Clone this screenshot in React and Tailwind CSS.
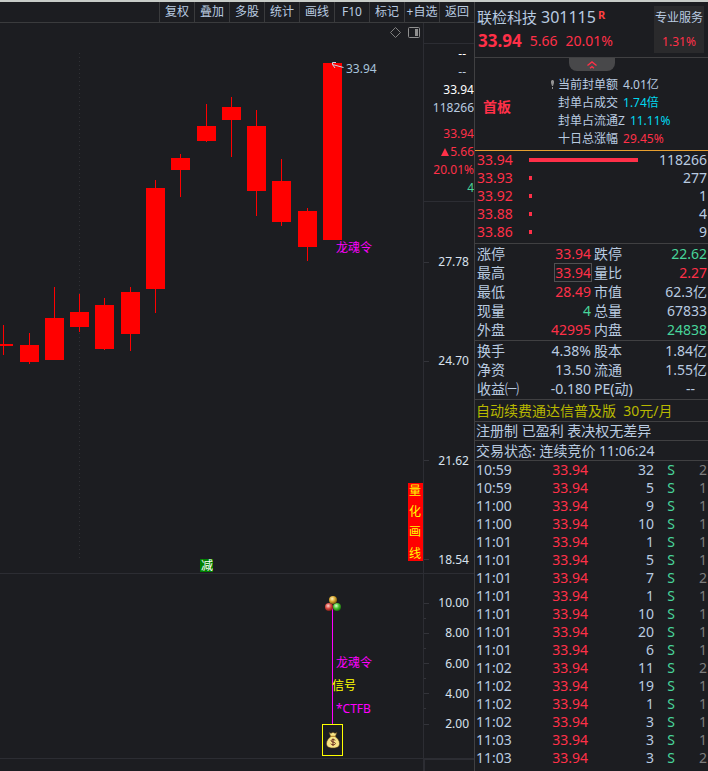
import React from "react";

const tools = ["复权", "叠加", "多股", "统计", "画线", "F10", "标记", "+自选", "返回"];

// x: left of the body, wick: centre line, body / range: top and bottom
const candles = [
    { x: -6, wick: 3, body: [321, 323], range: [302, 332] },
    { x: 20, wick: 29, body: [322, 339], range: [310, 341] },
    { x: 45, wick: 54, body: [295, 337], range: [264, 337] },
    { x: 70, wick: 79, body: [289, 304], range: [271, 309] },
    { x: 95, wick: 104, body: [282, 326], range: [275, 327] },
    { x: 121, wick: 130, body: [269, 311], range: [264, 328] },
    { x: 146, wick: 155, body: [165, 266], range: [157, 290] },
    { x: 171, wick: 180, body: [135, 147], range: [131, 174] },
    { x: 197, wick: 206, body: [103, 118], range: [81, 119] },
    { x: 222, wick: 231, body: [84, 97], range: [74, 134] },
    { x: 247, wick: 256, body: [103, 168], range: [87, 193] },
    { x: 272, wick: 281, body: [158, 199], range: [136, 203] },
    { x: 298, wick: 307, body: [188, 224], range: [185, 238] },
    { x: 323, wick: 332, body: [40, 217], range: [40, 217] },
];

const priceAxis = ["27.78", "24.70", "21.62", "18.54"];
const indicatorAxis = ["10.00", "", "8.00", "", "6.00", "", "4.00", "", "2.00"];

const sealInfo = [
    { label: "当前封单额", value: "4.01亿", color: "text-[#b9cbe0]", mark: true },
    { label: "封单占成交", value: "1.74倍", color: "text-[#00d8f0]" },
    { label: "封单占流通Z", value: "11.11%", color: "text-[#00d8f0]" },
    { label: "十日总涨幅", value: "29.45%", color: "text-[#ff3048]" },
];

const bids = [
    { price: "33.94", volume: "118266", full: true },
    { price: "33.93", volume: "277" },
    { price: "33.92", volume: "1" },
    { price: "33.88", volume: "4" },
    { price: "33.86", volume: "9" },
];

const RED = "text-[#ff3048]";
const GREEN = "text-[#48d49a]";
const PLAIN = "text-[#b9cbe0]";

const quotes = [
    ["涨停", "33.94", RED, "跌停", "22.62", GREEN],
    ["最高", "33.94", RED, "量比", "2.27", RED],
    ["最低", "28.49", RED, "市值", "62.3亿", PLAIN],
    ["现量", "4", GREEN, "总量", "67833", PLAIN],
    ["外盘", "42995", RED, "内盘", "24838", GREEN],
];

const basics = [
    ["换手", "4.38%", PLAIN, "股本", "1.84亿", PLAIN],
    ["净资", "13.50", PLAIN, "流通", "1.55亿", PLAIN],
    ["收益㈠", "-0.180", PLAIN, "PE(动)", "--", PLAIN],
];

const trades = [
    ["10:59", 32, 2],
    ["10:59", 5, 1],
    ["11:00", 9, 1],
    ["11:00", 10, 1],
    ["11:01", 1, 1],
    ["11:01", 5, 1],
    ["11:01", 7, 2],
    ["11:01", 1, 1],
    ["11:01", 10, 1],
    ["11:01", 20, 1],
    ["11:01", 6, 1],
    ["11:02", 11, 2],
    ["11:02", 19, 1],
    ["11:02", 1, 1],
    ["11:02", 3, 1],
    ["11:03", 3, 1],
    ["11:03", 3, 2],
    ["11:03", 11, 2],
];

const Toolbar = () => (
    <div className="flex h-[21px] shrink-0 justify-end border-b border-[#3a3b3d]">
        {tools.map((name) => (
            <button
                key={name}
                type="button"
                className="w-[35px] cursor-pointer whitespace-nowrap border-l border-[#3a3b3d] text-center text-xs leading-5 text-[#b9cbe0]"
            >
                {name}
            </button>
        ))}
    </div>
);

const CandleChart = () => (
    <svg viewBox="0 0 423 550" className="block w-full text-xs">
        <line x1="79.5" y1="30" x2="79.5" y2="535" stroke="#303135" strokeDasharray="1 3" />
        {candles.map((c) => (
            <g key={c.wick} fill="#ff0000" shapeRendering="crispEdges">
                <rect x={c.x} y={c.body[0]} width="19" height={c.body[1] - c.body[0]} />
                <rect x={c.wick} y={c.range[0]} width="1" height={c.range[1] - c.range[0]} />
            </g>
        ))}

        {/* diamond and side panel toggles */}
        <path d="M395.5 4.5l5 5-5 5-5-5z" fill="none" stroke="#808080" />
        <rect x="408.5" y="4.5" width="11" height="10" rx="1" fill="none" stroke="#909090" />
        <rect x="415" y="6" width="3" height="7" fill="#909090" />

        {/* high price pointer */}
        <path d="M343.5 44.5L332.5 41.5M336 39.500H332.500V41.500L335 45" fill="none" stroke="#c8d8e8" />
        <text x="346" y="50" fill="#a8c4dc">33.94</text>
        <text x="336" y="229" fill="#ff00ff">龙魂令</text>

        <rect x="200" y="536" width="13" height="13" fill="#008000" />
        <text x="201" y="547" fill="#ffffff">减</text>

        <rect x="408" y="460" width="15" height="78" fill="#ff0000" />
        <g fill="#ffff00">
            <text x="409" y="472">量</text>
            <text x="409" y="493">化</text>
            <text x="409" y="513">画</text>
            <text x="409" y="535">线</text>
        </g>
    </svg>
);

const SignalChart = () => (
    <svg viewBox="0 0 423 184" className="block w-full text-xs">
        <defs>
            <radialGradient id="gold" cx="0.4" cy="0.35" r="0.7">
                <stop offset="0" stopColor="#fff3c0" />
                <stop offset="0.5" stopColor="#d8a830" />
                <stop offset="1" stopColor="#6a4a08" />
            </radialGradient>
            <radialGradient id="ruby" cx="0.4" cy="0.35" r="0.7">
                <stop offset="0" stopColor="#ffd8d0" />
                <stop offset="0.5" stopColor="#d84840" />
                <stop offset="1" stopColor="#701810" />
            </radialGradient>
            <radialGradient id="jade" cx="0.4" cy="0.35" r="0.7">
                <stop offset="0" stopColor="#e0ffd0" />
                <stop offset="0.5" stopColor="#48c030" />
                <stop offset="1" stopColor="#146008" />
            </radialGradient>
        </defs>
        <rect x="332" y="34" width="1" height="116" fill="#ff00ff" />
        <circle cx="329" cy="33" r="4" fill="url(#ruby)" />
        <circle cx="337" cy="33" r="4" fill="url(#jade)" />
        <circle cx="333" cy="26" r="4" fill="url(#gold)" />

        <text x="336" y="93" fill="#ff00ff">龙魂令</text>
        <text x="332" y="116" fill="#ffff00">信号</text>
        <text x="336" y="139" fill="#ff00ff">*CTFB</text>

        {/* money bag */}
        <rect x="322.5" y="150.500" width="20" height="31" fill="none" stroke="#ffff00" />
        <path
            d="M329 158.500l2 .8 2-1 2 1 2-.8-1.800 4.200c2.500 1.500 4.300 4 4.300 6.800 0 3-2 4.500-6.500 4.500s-6.500-1.500-6.500-4.500c0-2.800 1.800-5.300 4.300-6.800z"
            fill="#f8e488"
            stroke="#5a3c10"
            strokeWidth="0.6"
        />
        <path d="M330.500 162.300h5" stroke="#b07818" />
        <path
            d="M335.300 166.300c-.5-.8-4.300-1.200-4.300.5 0 1.600 4.400.9 4.400 2.700 0 1.800-4 1.500-4.700.3M333 164.500v7.500"
            fill="none"
            stroke="#6a2c20"
        />
    </svg>
);

const QuoteList = () => (
    <div className="border-b border-[#2c2d33] pt-5">
        <div className="h-[158px] border-t border-[#2c2d33] pt-px text-right text-xs leading-[18px] text-white">
            <p className="pr-2">--</p>
            <p className={`${PLAIN} pr-2`}>--</p>
            <p>33.94</p>
            <p className={PLAIN}>118266</p>
            <div className="pt-2 text-[#ff3048]">
                <p>33.94</p>
                <p className="flex items-center justify-end gap-px">
                    <svg viewBox="0 0 8 8" className="h-2 w-2" fill="currentColor">
                        <path d="M4 0l4 8H0z" />
                    </svg>
                    5.66
                </p>
                <p>20.01%</p>
                <p className={GREEN}>4</p>
            </div>
        </div>
    </div>
);

const AxisLabel = ({ value }) => (
    <div className="flex h-2 items-center justify-between pr-[5px]">
        <span className={value ? "h-px w-[5px] bg-[#33343a]" : "h-px w-[2px] bg-[#33343a]"} />
        <span className="text-xs leading-2 text-[#d8e2ee]">{value}</span>
    </div>
);

const StatTable = ({ rows }) => (
    <div className="border-b border-[#404042] pb-px pl-[2px] text-sm leading-[19px] text-[#b9cbe0]">
        {rows.map(([name, value, color, name2, value2, color2]) => (
            <div key={name} className="flex">
                <div className="flex w-[115px] justify-between">
                    <span>{name}</span>
                    <span className={`${color} ${name === "最高" ? "px-px outline outline-1 -outline-offset-1 outline-[#505052]" : "px-px"}`}>
                        {value}
                    </span>
                </div>
                <div className="flex flex-1 justify-between pl-[2px] pr-px">
                    <span>{name2}</span>
                    <span className={value2 === "--" ? `${color2} pr-3` : color2}>{value2}</span>
                </div>
            </div>
        ))}
    </div>
);

const StockPanel = () => (
    <aside className="flex w-[234px] shrink-0 flex-col border-l border-[#404042]">
        <header className="flex h-[56px] shrink-0 justify-between border-b border-[#404042] pl-[2px] pr-1">
            <div className="pt-[3px]">
                <h1 className="flex text-[15px] leading-6 text-[#b9cbe0]">
                    联检科技
                    <span className="pl-1 text-base leading-6">301115</span>
                    <span className="pl-[2px] text-[11px] font-bold leading-5 text-[#ff4040]">R</span>
                </h1>
                <p className="flex items-center gap-2 pl-px text-sm leading-6 text-[#ff3048]">
                    <b className="text-[17px] leading-6">33.94</b>
                    <span>5.66</span>
                    <span>20.01%</span>
                </p>
            </div>
            <div className="my-1 w-[50px] bg-[#2a2a2c] text-center text-xs leading-6 text-[#b9cbe0]">
                <p>专业服务</p>
                <p className="text-[#ff3048]">1.31%</p>
            </div>
        </header>

        <section className="h-[93px] shrink-0 border-b border-[#e8a030]">
            <button
                type="button"
                aria-label="收起"
                className="mx-auto flex h-[13px] w-[46px] cursor-pointer items-center justify-center rounded-b-lg bg-[#48484a]"
            >
                <svg viewBox="0 0 10 8" className="h-2 w-[10px]" fill="none" stroke="#ff3048" strokeWidth="1.3">
                    <path d="M.5 4.500L5 .9l4.500 3.600M3 7.300l2-1.800 2 1.800" />
                </svg>
            </button>
            <div className="flex justify-between pl-2">
                <p className="pt-[26px] text-sm font-bold leading-5 text-[#ff3048]">首板</p>
                <ul className="w-[157px] pt-[5px] text-xs leading-[18px] text-[#b9cbe0]">
                    {sealInfo.map((row) => (
                        <li key={row.label} className="flex gap-[5px]">
                            <span className="relative pl-[7px]">
                                {row.mark && (
                                    <svg viewBox="0 0 3 9" className="absolute left-0 top-1 h-[9px] w-[3px]" fill="#909090">
                                        <path d="M0 1l1-1h1l1 1v2L2 6H1L0 3zM1 7h1v2H1z" />
                                    </svg>
                                )}
                                {row.label}
                            </span>
                            <span className={row.color}>{row.value}</span>
                        </li>
                    ))}
                </ul>
            </div>
        </section>

        <section className="border-b border-[#404042] pb-[2px] pl-[2px] pr-px text-sm leading-[18px]">
            {bids.map((bid) => (
                <div key={bid.price} className="flex items-center">
                    <span className="w-[52px] text-[#ff3048]">{bid.price}</span>
                    <span className={bid.full ? "h-1 w-[109px] bg-[#ff3048]" : "h-1 w-[3px] bg-[#ff3048]"} />
                    <span className="flex-1 text-right text-[#b9cbe0]">{bid.volume}</span>
                </div>
            ))}
        </section>

        <StatTable rows={quotes} />
        <StatTable rows={basics} />

        <p className="whitespace-pre border-b border-[#404042] pl-px text-sm leading-[21px] text-[#b8b800]">自动续费通达信普及版  30元/月</p>
        <p className="border-b border-[#404042] pl-px text-sm leading-[18px] text-[#b9cbe0]">注册制 已盈利 表决权无差异</p>
        <p className="border-b border-[#404042] pl-px text-sm leading-[19px] text-[#b9cbe0]">交易状态: 连续竞价 11:06:24</p>

        <table className="w-full text-right text-sm leading-[18px] text-[#b9cbe0]">
            <tbody>
                {trades.map(([time, volume, count], index) => (
                    <tr key={index}>
                        <td className="w-[60px] p-0 pl-px text-left">{time}</td>
                        <td className="w-[53px] p-0 text-[#ff3048]">33.94</td>
                        <td className="p-0">{volume}</td>
                        <td className="w-[21px] p-0 text-[#48d49a]">S</td>
                        <td className="w-[33px] p-0 pr-px text-[#7c7c7c]">{count}</td>
                    </tr>
                ))}
            </tbody>
        </table>
    </aside>
);

const App = () => {
    return (
        <div className='flex h-screen overflow-hidden border-t-2 border-[#c8ccc8] bg-[#1c1d21] font-["Noto_Sans","Noto_Sans_CJK_SC",sans-serif]'>
            <main className="flex min-w-0 flex-1 flex-col">
                <Toolbar />
                <div className="flex border-b border-[#2c2d33]">
                    <div className="min-w-0 flex-1">
                        <CandleChart />
                    </div>
                    <div className="flex w-[51px] flex-col border-l border-[#2c2d33]">
                        <QuoteList />
                        <div className="flex flex-1 flex-col justify-between pb-[9px] pt-14">
                            {priceAxis.map((value) => (
                                <AxisLabel key={value} value={value} />
                            ))}
                        </div>
                    </div>
                </div>
                <div className="flex border-b border-[#2c2d33]">
                    <div className="min-w-0 flex-1">
                        <SignalChart />
                    </div>
                    <div className="flex w-[51px] flex-col justify-between border-l border-[#2c2d33] pb-[30px] pt-[25px]">
                        {indicatorAxis.map((value, index) => (
                            <AxisLabel key={index} value={value} />
                        ))}
                    </div>
                </div>
                <div className="flex flex-1 justify-end">
                    <div className="w-[51px] border-l-2 border-t border-[#2c2d33]" />
                </div>
            </main>
            <StockPanel />
        </div>
    );
};

export default App;
